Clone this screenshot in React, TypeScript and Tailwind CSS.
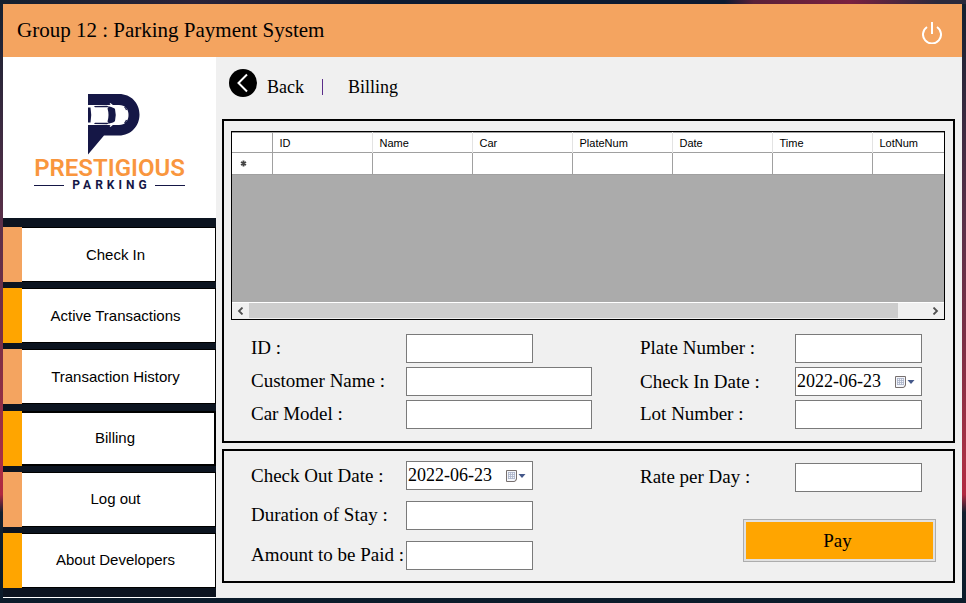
import React from "react";

const navItems = [
  { label: "Check In", stripe: "bg-[#f4a460]", active: false },
  { label: "Active Transactions", stripe: "bg-[#ffa500]", active: false },
  { label: "Transaction History", stripe: "bg-[#f4a460]", active: false },
  { label: "Billing", stripe: "bg-[#ffa500]", active: true },
  { label: "Log out", stripe: "bg-[#f4a460]", active: false },
  { label: "About Developers", stripe: "bg-[#ffa500]", active: false },
];

const columns = ["ID", "Name", "Car", "PlateNum", "Date", "Time", "LotNum"];

function Logo() {
  return (
    <div className="flex h-[161px] flex-col items-center bg-white pt-[37px]">
      <svg width="52" height="61" viewBox="0 0 52 61" className="ml-2" aria-hidden="true">
        <path d="M0 0H31C43 0 51.500 9 51.500 20.500S43 41.500 31 41.500H16L0 60.500Z" fill="#151746" />
        <path d="M0 11H31C37 11 40.500 15 40.500 21S37 31 31 31H0Z" fill="#fff" />
        <path d="M0 13.500H2.500Q4 21 2.500 28.500H0Z" fill="#151746" />
        <path d="M21 12.500Q26 13.500 27 15Q28.500 21 27 27Q26 28.500 21 29.500L19.500 27.500Q21.500 21 19.500 14.500Z" fill="#151746" />
        <path d="M6 12L19 11.700L22 13.200H7ZM6 30L19 30.300L22 28.800H7Z" fill="#151746" />
        <path d="M22 9.500L25 12M22 32.500L25 30" stroke="#fff" strokeWidth="1.500" />
        <path d="M36.500 13Q38 14 38.500 16M36.500 29Q38 28 38.500 26" stroke="#151746" strokeWidth="1.200" fill="none" />
      </svg>
      <div className="mt-[3px] font-[Roboto,sans-serif] text-[24px] leading-5 font-semibold text-[#f9963e]">
        PRESTIGIOUS
      </div>
      <div className="mt-px flex w-[151px] items-center justify-between">
        <span className="h-px w-[30px] bg-[#151746]" />
        <span className="-mr-1 font-[Roboto,sans-serif] text-[12px] leading-3 font-bold tracking-[4px] text-[#151746]">
          PARKING
        </span>
        <span className="h-px w-[30px] bg-[#151746]" />
      </div>
    </div>
  );
}

function Field({ id, label, wide = false }: { id: string; label: string; wide?: boolean }) {
  return (
    <div className="flex items-center">
      <label htmlFor={id} className="w-[155px] pb-0.5 whitespace-nowrap">{label}</label>
      <input
        id={id}
        type="text"
        className={`${wide ? "w-[186px]" : "w-[127px]"} h-[29px] border border-[#7a7a7a] bg-white px-1 outline-none`}
      />
    </div>
  );
}

function DateField({ id, label }: { id: string; label: string }) {
  return (
    <div className="flex items-center">
      <label htmlFor={id} className="w-[155px] whitespace-nowrap">{label}</label>
      <div className="flex h-[29px] w-[127px] items-center border border-[#7a7a7a] bg-white">
        <input id={id} type="text" defaultValue="2022-06-23" className="w-[98px] bg-transparent pb-0.5 pl-px text-lg leading-6 outline-none" />
        <button type="button" aria-label={`Open calendar, ${label}`} className="flex items-center">
          <svg width="22" height="14" viewBox="0 0 22 14" aria-hidden="true">
            <path d="M2 2H12V11L10 13H2Z" fill="#b9b2b0" />
            <path d="M1.500 1.500H11.500V10L9.500 12.500H1.500Z" fill="#f4f6fb" stroke="#77706f" />
            <path d="M3 3.500H10M3 5.500H10M3 7.500H10M3 9.500H10M3.500 3V10M5.500 3V10M7.500 3V10M9.500 3V10" stroke="#a9b3c8" strokeWidth=".8" />
            <path d="M13.500 5H20.500L17 9Z" fill="#44588a" />
          </svg>
        </button>
      </div>
    </div>
  );
}

function Grid() {
  return (
    <div className="flex h-[189px] flex-col border border-black bg-[#ababab]">
      <div className="min-h-0 flex-1 overflow-hidden">
        <table className="w-[740px] table-fixed border-collapse bg-white text-left font-['Liberation_Sans',Arial,sans-serif] text-[11px] leading-4">
          <colgroup>
            <col className="w-10" />
            {columns.map((c) => <col key={c} className="w-[100px]" />)}
          </colgroup>
          <thead>
            <tr className="h-5 border-t border-b border-[#a0a0a0]">
              <th className="border-r border-[#a0a0a0] p-0" aria-label="Row" />
              {columns.map((c) => (
                <th key={c} className="border-r border-[#e3e3e3] p-0 pl-[7px] font-normal">{c}</th>
              ))}
            </tr>
          </thead>
          <tbody>
            <tr className="h-[22px] border-b border-[#a0a0a0]">
              <td className="border-r border-[#a0a0a0] p-0 pl-2">
                <svg width="7" height="7" viewBox="0 0 7 7" aria-label="New row">
                  <path d="M3.500 .5V6.500M1 2L6 5M6 2L1 5" stroke="#444" strokeWidth="1.800" />
                </svg>
              </td>
              {columns.map((c) => <td key={c} className="border-r border-[#a0a0a0] p-0" />)}
            </tr>
          </tbody>
        </table>
      </div>
      <div className="flex h-[17px] border-t border-white bg-[#f0f0f0]">
        <button type="button" aria-label="Scroll left" className="flex w-[17px] items-center justify-center">
          <svg width="7" height="8" viewBox="0 0 7 8"><path d="M5.500 .5L2 4L5.500 7.500" fill="none" stroke="#505050" strokeWidth="1.800" /></svg>
        </button>
        <div className="flex-1 pr-[29px]"><div className="h-[15px] bg-[#cdcdcd]" /></div>
        <button type="button" aria-label="Scroll right" className="flex w-[17px] items-center justify-center">
          <svg width="7" height="8" viewBox="0 0 7 8"><path d="M1.500 .5L5 4L1.500 7.500" fill="none" stroke="#505050" strokeWidth="1.800" /></svg>
        </button>
      </div>
    </div>
  );
}

export default function App() {
  return (
    <div className="min-h-screen [background:linear-gradient(to_right,#14202f_0%,#2a2238_20%,#0c1a30_40%,#0c1a30_75%,#5a2038_78%,#7a2040_88%,#2a2a3c_97%)_top/100%_4px_no-repeat,linear-gradient(to_bottom,#14202f_0%,#3a2a40_20%,#5c3049_38%,#7a2f45_56%,#a83044_76%,#b02840_82%,#12202f_85%,#0b1b2a_100%)] pt-1 pr-1 pb-[5px] pl-[3px] font-['Liberation_Serif','Times_New_Roman',serif] text-[19px] leading-6 text-black">
      <div className="bg-[#f0f0f0]">
        <header className="flex h-[53px] items-center justify-between bg-[#f4a460] pr-5 pb-0.5 pl-3.5">
          <h1 className="text-[21px]">Group 12 : Parking Payment System</h1>
          <button type="button" aria-label="Exit" className="mt-1.5">
            <svg width="20" height="22" viewBox="0 0 20 22" fill="none" stroke="#fff" strokeWidth="2">
              <path d="M5 5A9 9 0 1 0 15 5M10 0V12" />
            </svg>
          </button>
        </header>
        <div className="flex">
          <aside className="flex w-[213px] shrink-0 flex-col border-b border-white bg-[#0c1420]">
            <Logo />
            <nav className="flex flex-1 flex-col justify-between py-[9px] font-['Liberation_Sans',Arial,sans-serif] text-[15px]">
              {navItems.map((n) => (
                <div key={n.label} className="flex h-[55px]">
                  <span className={`w-[19px] ${n.stripe}`} />
                  <button
                    type="button"
                    className={`flex-1 bg-white pr-1.5 ${n.active ? "border-y-2 border-r-2" : "border-y border-r"} border-black`}
                  >
                    {n.label}
                  </button>
                </div>
              ))}
            </nav>
          </aside>
          <main className="flex min-w-0 flex-1 flex-col pr-[7px] pb-[15px] pl-1.5">
            <div className="flex h-[62px] items-center pb-0.5 pl-[7px] text-lg leading-6">
              <button type="button" className="flex items-center gap-2.5">
                <svg width="28" height="28" viewBox="0 0 28 28" className="mb-2" aria-hidden="true">
                  <circle cx="14" cy="14" r="14" fill="#000" />
                  <path d="M18 5.500L9.500 14L18 22.500" fill="none" stroke="#fff" strokeWidth="2" />
                </svg>
                Back
              </button>
              <span className="ml-[18px] h-4 w-px bg-[#5b2d8a]" />
              <h2 className="ml-[25px]">Billing</h2>
            </div>
            <section className="border-2 border-black pt-2.5 pr-2 pb-3 pl-[7px]">
              <Grid />
              <div className="mt-3.5 flex justify-between pr-[23px] pl-5">
                <div className="flex flex-col gap-1">
                  <Field id="id" label="ID :" />
                  <Field id="customer" label="Customer Name :" wide />
                  <Field id="model" label="Car Model :" wide />
                </div>
                <div className="flex flex-col gap-1">
                  <Field id="plate" label="Plate Number :" />
                  <DateField id="checkin" label="Check In Date :" />
                  <Field id="lot" label="Lot Number :" />
                </div>
              </div>
            </section>
            <section className="mt-1.5 flex justify-between border-2 border-black pt-2.5 pr-[17px] pb-[11px] pl-[27px]">
              <div className="flex flex-col gap-[11px]">
                <DateField id="checkout" label="Check Out Date :" />
                <Field id="duration" label="Duration of Stay :" />
                <Field id="amount" label="Amount to be Paid :" />
              </div>
              <div className="flex flex-col items-end gap-[27px] pt-0.5">
                <div className="pr-3.5"><Field id="rate" label="Rate per Day :" /></div>
                <button type="button" className="h-[43px] w-[193px] border border-[#adadad] bg-[#e1e1e1] p-0.5">
                  <span className="flex h-full items-center justify-center bg-[#ffa500] pr-1">Pay</span>
                </button>
              </div>
            </section>
          </main>
        </div>
      </div>
    </div>
  );
}
